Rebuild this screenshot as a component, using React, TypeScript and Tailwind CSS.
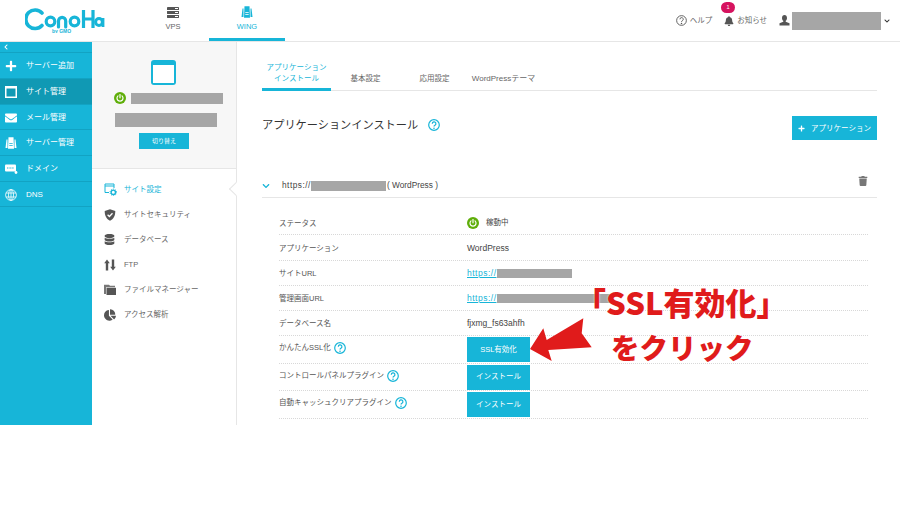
import React from "react";
import {
  FaPlus, FaEnvelope, FaDatabase, FaChartPie, FaBell, FaTrash,
  FaChevronDown, FaChevronLeft,
} from "react-icons/fa";

const TEAL = "#17b5d8";

function Redact({ className }: { className: string }) {
  return <span className={"inline-block bg-[#a6a6a6] " + className} />;
}

function Power({ size = 12 }: { size?: number }) {
  return (
    <svg width={size} height={size} viewBox="0 0 12 12" className="shrink-0">
      <circle cx="6" cy="6" r="6" fill="#5fae0a" />
      <path d="M6 2.6v3.2" stroke="#fff" strokeWidth="1.2" strokeLinecap="round" />
      <path d="M4 3.9a3 3 0 1 0 4 0" fill="none" stroke="#fff" strokeWidth="1.2" strokeLinecap="round" />
    </svg>
  );
}

function Help({ size = 11, color = TEAL, sw = 1 }: { size?: number; color?: string; sw?: number }) {
  return (
    <svg width={size} height={size} viewBox="0 0 12 12" className="shrink-0">
      <circle cx="6" cy="6" r="5.3" fill="none" stroke={color} strokeWidth={sw} />
      <path d="M4.3 4.7a1.8 1.8 0 1 1 2.7 1.5c-.7.4-1 .7-1 1.4" fill="none" stroke={color} strokeWidth={sw} />
      <circle cx="6" cy="9.2" r=".8" fill={color} />
    </svg>
  );
}

function Logo() {
  return (
    <svg width="80" height="26" viewBox="0 0 80 26" className="shrink-0">
      <g fill="none" stroke={TEAL} strokeWidth="3.6" strokeLinecap="round">
        <path d="M17 6A9.3 9.3 0 1 0 17 18.5" />
        <circle cx="25.5" cy="14.5" r="4.3" strokeWidth="3.2" />
        <path d="M33.5 20v-6a3.6 3.6 0 0 1 7.2 0v6" strokeWidth="3.2" />
        <circle cx="49.5" cy="14.5" r="4.3" strokeWidth="3.2" />
        <path d="M58.5 3v18M68 3v18M58.5 12H68" strokeLinecap="butt" strokeWidth="3.2" />
        <circle cx="74" cy="15" r="3.4" strokeWidth="3" />
        <path d="M78 11v9" strokeWidth="2.8" strokeLinecap="butt" />
      </g>
      <text x="27" y="25.5" fontSize="5" fontWeight="700" fill={TEAL} fontFamily="Liberation Sans">by GMO</text>
    </svg>
  );
}

function ServerIcon() {
  return (
    <svg width="12" height="11" viewBox="0 0 12 11">
      <g fill="#555">
        <rect x="0" y="0" width="12" height="3.1" rx=".4" />
        <rect x="0" y="3.9" width="12" height="3.1" rx=".4" />
        <rect x="0" y="7.9" width="12" height="3.1" rx=".4" />
      </g>
      <g fill="#fff">
        <rect x="8" y="1" width="3" height="1" />
        <rect x="8" y="5" width="3" height="1" />
        <rect x="8" y="9" width="3" height="1" />
      </g>
    </svg>
  );
}

function WingIcon({ color = TEAL, size = 12, ink = "#fff" }: { color?: string; size?: number; ink?: string }) {
  return (
    <svg width={size} height={size} viewBox="0 0 12 12">
      <path d="M3.5 .3h5l.5 11.4H3z" fill={color} />
      <path d="M1.5 2.5h1v8.5H.5zM9.5 2.500h1l1 8.500h-2z" fill={color} />
      <path d="M4.3 6.500h3.400M4.3 8.500h3.400" stroke={ink} strokeWidth=".8" />
    </svg>
  );
}

function WindowIcon() {
  return (
    <svg width="12" height="12" viewBox="0 0 12 12">
      <rect x=".75" y=".75" width="10.5" height="10.5" fill="none" stroke="#fff" strokeWidth="1.5" />
      <rect x="1" y="1" width="10" height="1.5" fill="#fff" />
    </svg>
  );
}

function DomainIcon() {
  return (
    <svg width="13" height="12" viewBox="0 0 13 12">
      <rect x="0" y="1.5" width="11" height="7" rx="1" fill="#fff" />
      <path d="M2 5h7" stroke={TEAL} strokeWidth="1.2" strokeDasharray="1 .6" />
      <circle cx="11" cy="9.5" r="1.4" fill="#fff" />
    </svg>
  );
}

function GlobeIcon() {
  return (
    <svg width="12" height="12" viewBox="0 0 12 12" fill="none" stroke="#fff" strokeWidth=".8">
      <circle cx="6" cy="6" r="5.4" />
      <ellipse cx="6" cy="6" rx="2.5" ry="5.4" />
      <path d="M6 .6v10.8M1 4h10M1 8h10" />
    </svg>
  );
}

function SiteGear() {
  return (
    <svg width="13" height="13" viewBox="0 0 13 13">
      <path d="M5 9.5H1V1h9v4M1 3h9" fill="none" stroke={TEAL} strokeWidth="1" />
      <circle cx="9.3" cy="9.3" r="2.2" fill="none" stroke={TEAL} strokeWidth="1.4" />
      <circle cx="9.3" cy="9.3" r="3.3" fill="none" stroke={TEAL} strokeWidth=".9" strokeDasharray="1 1.1" />
    </svg>
  );
}

function ShieldIcon() {
  return (
    <svg width="12" height="12" viewBox="0 0 12 12">
      <path d="M6 .3 11.3 2c0 5-1.8 8-5.3 9.7C2.5 10 .7 7 .7 2z" fill="#555" />
      <path d="M3.6 5.7 5.4 7.5 8.5 4.3" fill="none" stroke="#fff" strokeWidth="1.3" />
    </svg>
  );
}

function FolderIcon() {
  return (
    <svg width="12" height="12" viewBox="0 0 12 12">
      <path d="M0 .8h5l1 1h5v1.5H2V10H0z" fill="#777" />
      <path d="M2.5 3.8H12V11H2.5z" fill="#555" />
    </svg>
  );
}

function FtpIcon() {
  return (
    <svg width="12" height="12" viewBox="0 0 12 12" fill="#555">
      <path d="M3 .5 5.8 4.2H4.2V11.5H1.800V4.2H.2z" />
      <path d="M9 11.5 11.8 7.8H10.2V.5H7.800V7.8H6.2z" />
    </svg>
  );
}

function PersonIcon() {
  return (
    <svg width="11" height="11" viewBox="0 0 11 11" fill="#555">
      <path d="M5.5 0C7 0 8 1.2 8 2.9 8 4.2 7.4 5.3 6.7 5.8V6.8L10.5 8.3V10.5H.5V8.3L4.3 6.8V5.8C3.6 5.3 3 4.2 3 2.9 3 1.2 4 0 5.5 0z" />
    </svg>
  );
}

const navItems = [
  { label: "サーバー追加", icon: <FaPlus size={12} color="#fff" />, cls: "h-[26px]" },
  { label: "サイト管理", icon: <WindowIcon />, cls: "h-[26px] bg-[#1099b4]" },
  { label: "メール管理", icon: <FaEnvelope size={12} color="#fff" />, cls: "h-[25px] pt-[1px]" },
  { label: "サーバー管理", icon: <WingIcon color="#fff" ink={TEAL} />, cls: "h-[26px] pt-[1px]" },
  { label: "ドメイン", icon: <DomainIcon />, cls: "h-[26px] pt-[1px]" },
  { label: "DNS", icon: <GlobeIcon />, cls: "h-[25px] pt-[1px]" },
];

const siteMenu = [
  { label: "サイト設定", icon: <SiteGear />, active: true },
  { label: "サイトセキュリティ", icon: <ShieldIcon />, active: false },
  { label: "データベース", icon: <FaDatabase size={11} color="#555" />, active: false },
  { label: "FTP", icon: <FtpIcon />, active: false },
  { label: "ファイルマネージャー", icon: <FolderIcon />, active: false },
  { label: "アクセス解析", icon: <FaChartPie size={12} color="#555" />, active: false },
];

const Row = ({ label, help, first, h, children }: { label: string; help?: boolean; first?: boolean; h: string; children: React.ReactNode }) => (
  <div className={"flex items-center border-b border-dotted border-[#d8d8d8] " + h}>
    <div className={"w-[188px] flex items-center gap-[3px] text-[7.5px] text-[#555] shrink-0 " + (help ? "pb-[3px]" : first ? "pt-[4px]" : "pt-[2px]")}>
      <span>{label}</span>
      {help && <Help size={12} sw={1.2} />}
    </div>
    <div className={"flex items-center text-[7.5px] text-[#444] " + (help ? "" : first ? "pt-[3px]" : "pt-[1px]")}>{children}</div>
  </div>
);

const InstallBtn = ({ label }: { label: string }) => (
  <button className="w-[63px] h-[25px] bg-[#17b5d8] text-white text-[7.5px] flex items-center justify-center">{label}</button>
);

export default function App() {
  return (
    <div className="relative w-[900px] h-[506px] bg-white overflow-hidden font-['Liberation_Sans','Noto_Sans_CJK_JP',sans-serif]">
      <div className="h-[425px] flex flex-col overflow-hidden">
        {/* header */}
        <header className="h-[42px] shrink-0 flex items-stretch border-b border-[#e6e6e6]">
          <div className="w-[140px] pl-[25px] pt-[7px] shrink-0"><Logo /></div>
          <div className="flex">
            <div className="w-[66px] flex flex-col items-center pt-[7px] gap-[3px] text-[7.5px] text-[#666]">
              <ServerIcon />
              <span>VPS</span>
            </div>
            <div className="w-[76px] ml-[3px] flex flex-col items-center pt-[6px] gap-[3px] text-[7.5px] text-[#17b5d8] border-b-[3px] border-[#17b5d8]">
              <WingIcon />
              <span>WING</span>
            </div>
          </div>
          <div className="ml-auto flex items-center pr-[10px] text-[7.5px] text-[#666]">
            <div className="flex items-center gap-[3px] mr-[12px]"><Help size={11} color="#555" /><span>ヘルプ</span></div>
            <div className="relative flex items-center gap-[3px] mr-[12px]">
              <FaBell size={10} color="#555" />
              <span>お知らせ</span>
              <span className="absolute -left-[3px] -top-[13px] w-[14px] h-[11px] rounded-full bg-[#d6135f] text-white text-[5.5px] flex items-center justify-center">1</span>
            </div>
            <PersonIcon />
            <Redact className="w-[89px] h-[18px] ml-[2px]" />
            <FaChevronDown size={6} color="#333" className="ml-[3px]" />
          </div>
        </header>

        <div className="flex flex-1 min-h-0">
          {/* sidebar */}
          <aside className="w-[92px] shrink-0 bg-[#17b5d8] text-white text-[8px]">
            <div className="h-[11px] pl-[3px] flex items-center border-b border-[#12a3c3]"><FaChevronLeft size={6} color="#fff" /></div>
            {navItems.map((n) => (
              <div key={n.label} className={"flex items-center border-b border-[#12a3c3] " + n.cls}>
                <span className="w-[26px] pl-[5px] flex items-center">{n.icon}</span>
                <span>{n.label}</span>
              </div>
            ))}
          </aside>

          {/* site column */}
          <section className="w-[145px] shrink-0 border-r border-[#e6e6e6] flex flex-col">
            <div className="h-[127px] shrink-0 bg-[#f7f7f7] border-b border-[#e6e6e6] flex flex-col items-center pt-[18px]">
              <div className="w-[25px] h-[25px] ml-[-1px] rounded-[3px] bg-[#17b5d8] p-[2px] pt-[5px]">
                <div className="w-full h-full bg-white" />
              </div>
              <div className="flex items-center mt-[7px] gap-[5px] ml-[9px]">
                <Power />
                <Redact className="w-[92px] h-[11px]" />
              </div>
              <Redact className="w-[102px] h-[14px] mt-[9px] ml-[4px]" />
              <button className="w-[50px] h-[16px] mt-[6px] bg-[#17b5d8] text-white text-[6px]">切り替え</button>
            </div>
            <ul className="relative pt-[8px] pl-[12px]">
              {siteMenu.map((m) => (
                <li key={m.label} className={"h-[25px] flex items-center text-[7.5px] " + (m.active ? "text-[#17b5d8]" : "text-[#666]")}>
                  <span className="w-[20px] flex items-center">{m.icon}</span>
                  <span>{m.label}</span>
                </li>
              ))}
              <span className="absolute top-[15px] -right-[5px] w-[10px] h-[10px] bg-white rotate-45 border-l border-b border-[#e6e6e6]" />
            </ul>
          </section>

          {/* main */}
          <main className="flex-1 min-w-0 pl-[25px] pr-[23px] pt-[16px]">
            <nav className="flex h-[33px] border-b border-[#e6e6e6] text-[7.5px] text-[#666]">
              <div className="w-[69px] h-[33px] border-b-[3px] border-[#17b5d8] text-[#17b5d8] text-center leading-[11px] pt-[4px]">アプリケーション<br />インストール</div>
              <div className="w-[69px] h-[33px] text-center pt-[15px] leading-[11px]">基本設定</div>
              <div className="w-[69px] h-[33px] text-center pt-[15px] leading-[11px]">応用設定</div>
              <div className="w-[69px] h-[33px] text-center pt-[15px] leading-[11px] text-[8px]">WordPressテーマ</div>
            </nav>

            <div className="flex items-start justify-between mt-[25px]">
              <div className="flex items-center gap-[10px] h-[16px] pt-[2px]">
                <h1 className="text-[11.2px] text-[#333] font-normal">アプリケーションインストール</h1>
                <Help size={12} sw={1.2} />
              </div>
              <button className="w-[85px] h-[24px] pt-[1px] bg-[#17b5d8] text-white text-[7.5px] flex items-center justify-center gap-[6px]">
                <FaPlus size={7} color="#fff" /><span>アプリケーション</span>
              </button>
            </div>

            <div className="mt-[32px] h-[26px] pt-[2px] flex items-center border-b border-[#e6e6e6] text-[8.3px] text-[#444]">
              <FaChevronDown size={8} color="#17b5d8" />
              <span className="ml-[12px] tracking-[0.5px]">https://</span>
              <Redact className="w-[75px] h-[10px]" />
              <span className="ml-[1px]">( WordPress )</span>
              <FaTrash size={10} color="#777" className="ml-auto mr-[9px] -mt-[10px]" />
            </div>

            <div className="mt-[11px] ml-[17px] mr-[9px]">
              <Row label="ステータス" first h="h-[26px]">
                <Power size={12} /><span className="ml-[7px]">稼動中</span>
              </Row>
              <Row label="アプリケーション" h="h-[26px]"><span className="text-[8.5px]">WordPress</span></Row>
              <Row label="サイトURL" h="h-[25px]">
                <span className="text-[8.5px] text-[#17b5d8] underline tracking-[0.5px]">https://</span>
                <Redact className="w-[75px] h-[9px]" />
              </Row>
              <Row label="管理画面URL" h="h-[25px]">
                <span className="text-[8.5px] text-[#17b5d8] underline tracking-[0.5px]">https://</span>
                <Redact className="w-[113px] h-[9px]" />
              </Row>
              <Row label="データベース名" h="h-[25px]"><span className="text-[8.5px]">fjxmg_fs63ahfh</span></Row>
              <Row label="かんたんSSL化" help h="h-[28px]"><InstallBtn label="SSL有効化" /></Row>
              <Row label="コントロールパネルプラグイン" help h="h-[27px]"><InstallBtn label="インストール" /></Row>
              <Row label="自動キャッシュクリアプラグイン" help h="h-[28px]"><InstallBtn label="インストール" /></Row>
            </div>
          </main>
        </div>
      </div>

      {/* annotation overlay */}
      <div className="absolute left-[575px] top-[282px] text-[31px] leading-[40px] font-black text-[#e01b1b] whitespace-nowrap font-['Noto_Sans_CJK_JP',sans-serif] [text-shadow:0_0_2px_#fff]">「SSL有効化」</div>
      <div className="absolute left-[611px] top-[328px] text-[28.5px] leading-[38px] font-black text-[#e01b1b] whitespace-nowrap font-['Noto_Sans_CJK_JP',sans-serif] [text-shadow:0_0_2px_#fff]">をクリック</div>
      <svg width="70" height="60" viewBox="0 0 70 60" className="absolute left-[525px] top-[312px]">
        <polygon points="5,37 18.3,16.3 21.7,28 58.3,6.3 56.7,21.3 66.7,35.3 23.3,38 26.7,49" fill="#e01b1b" />
      </svg>
    </div>
  );
}
